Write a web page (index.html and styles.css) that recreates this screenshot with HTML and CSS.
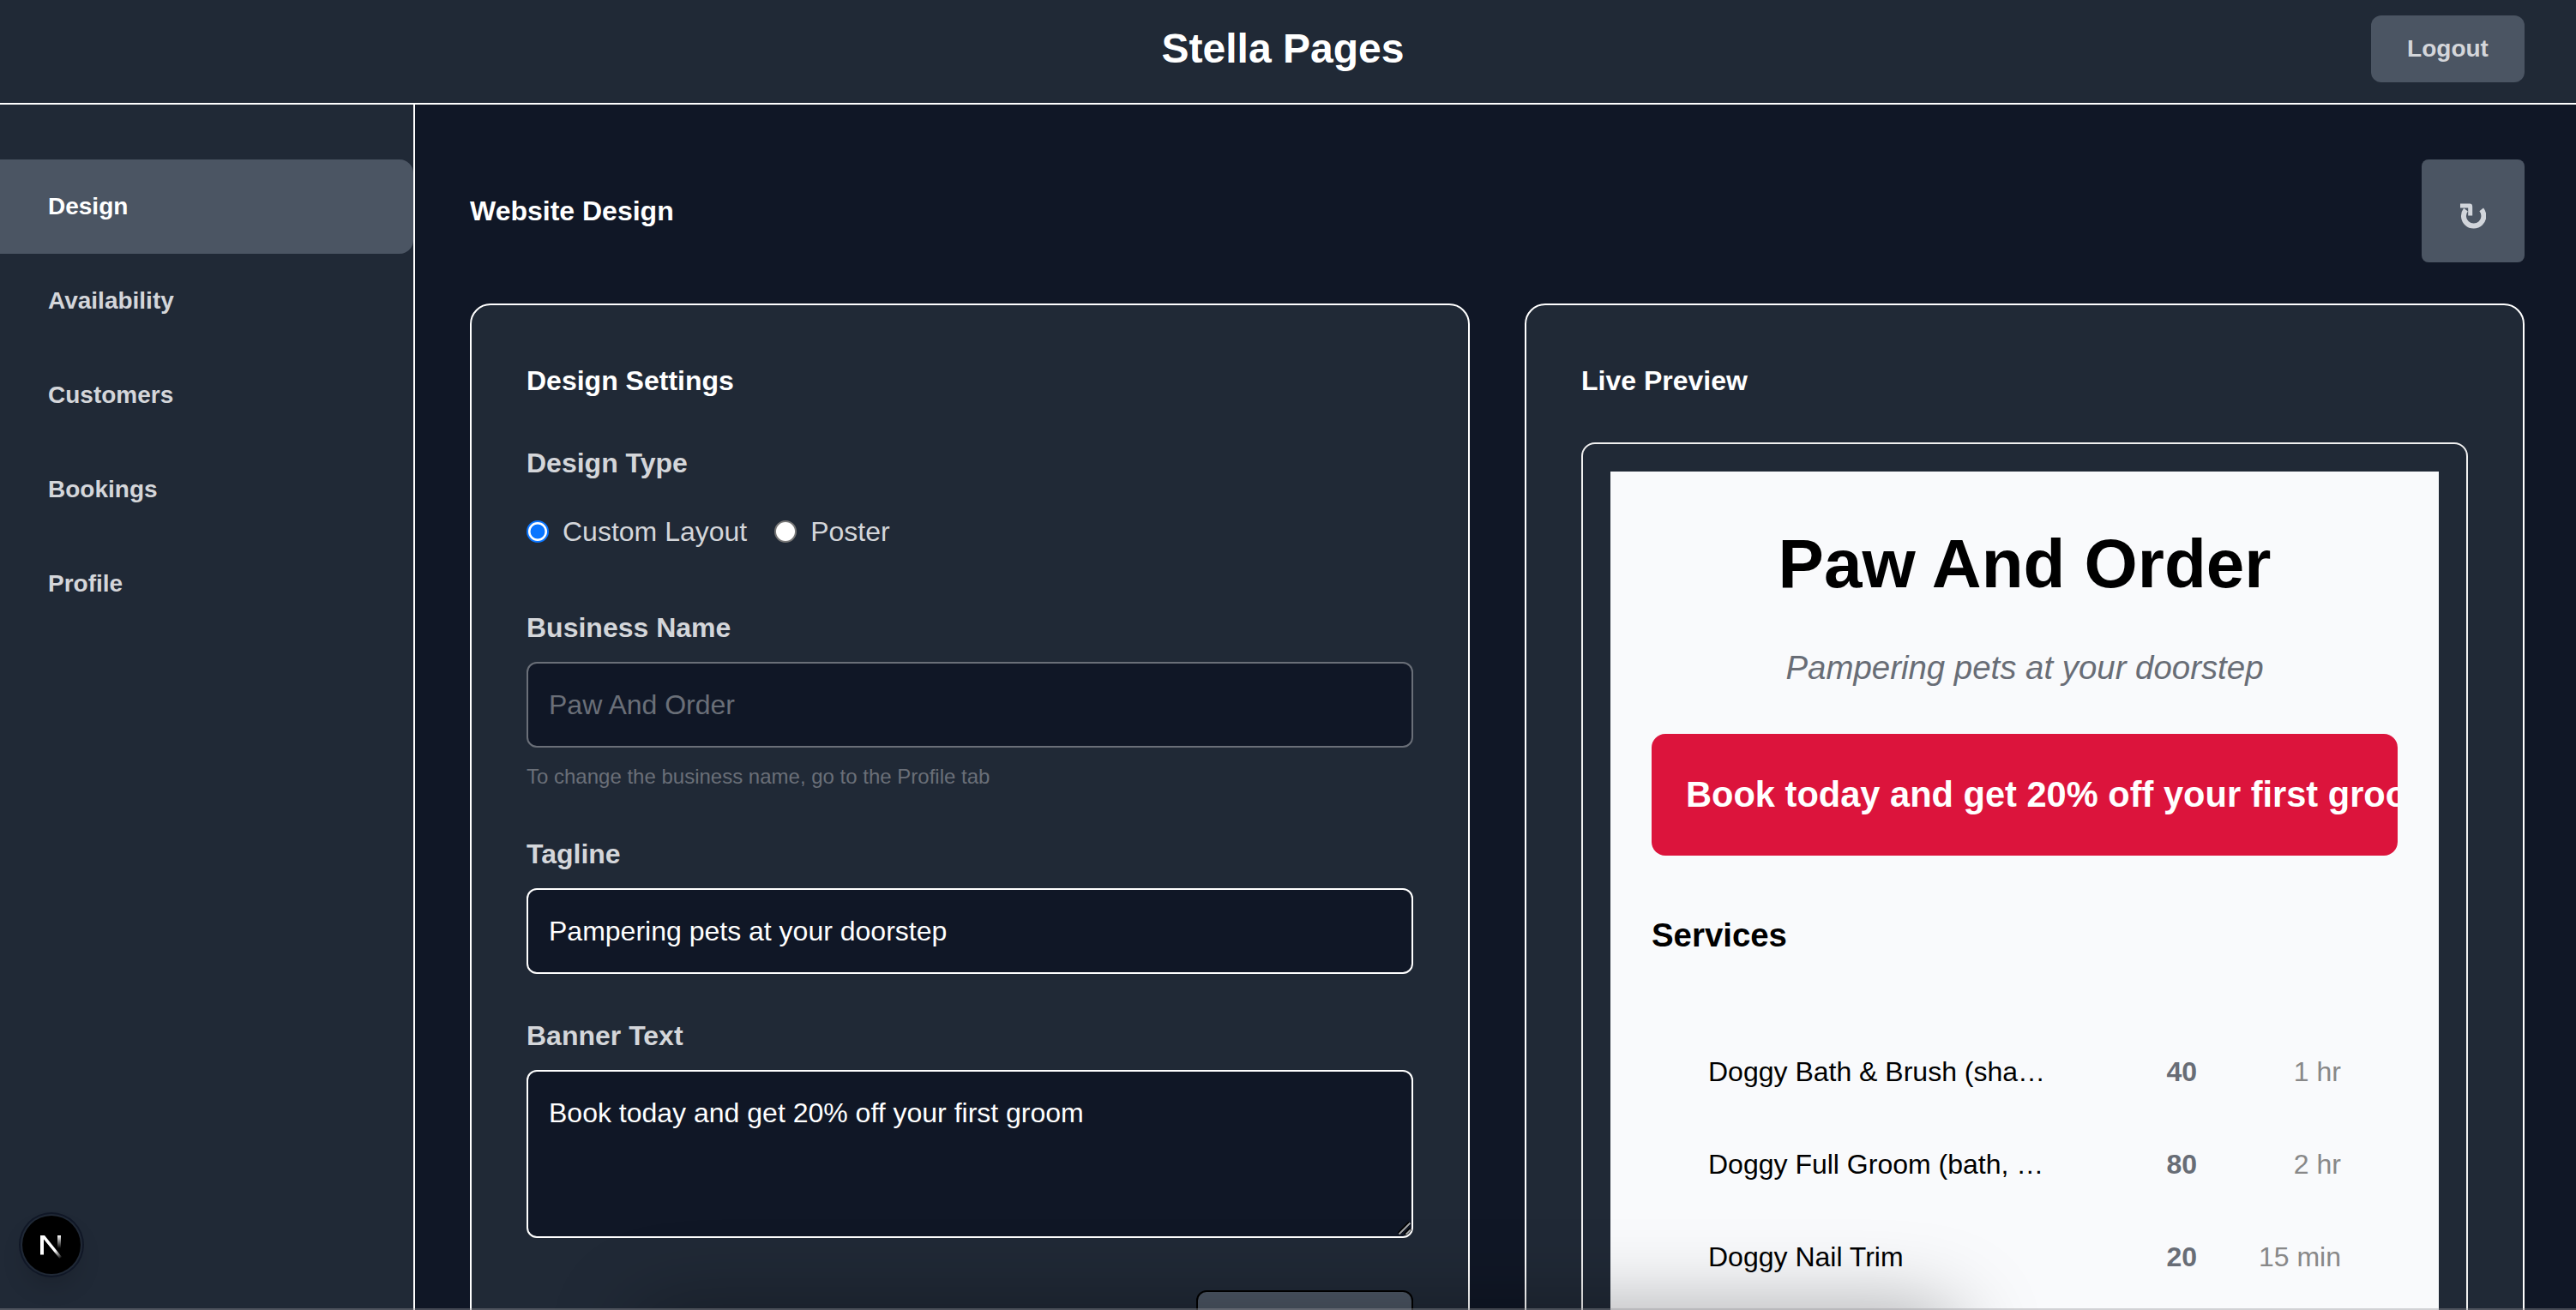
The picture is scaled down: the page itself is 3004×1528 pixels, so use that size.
FILE: index.html
```html
<!DOCTYPE html>
<html lang="en">

<head>
    <meta charset="UTF-8">
    <meta name="viewport" content="width=device-width, initial-scale=1.0">
    <title>Stella Pages</title>
    <link rel="stylesheet" href="styles.css">
</head>

<body>
    <header class="header">
        <h1>Stella Pages</h1>
        <button class="btn logout" type="button">Logout</button>
    </header>

    <div class="layout">
        <nav class="sidebar">
            <a class="nav-item active">Design</a>
            <a class="nav-item">Availability</a>
            <a class="nav-item">Customers</a>
            <a class="nav-item">Bookings</a>
            <a class="nav-item">Profile</a>
        </nav>

        <main class="main">
            <div class="page-head">
                <h2>Website Design</h2>
                <button class="btn refresh" type="button" aria-label="Refresh">
                    <svg width="30" height="30" viewBox="0 0 30 30">
                        <path d="M6.5 7.6A11.7 11.7 0 1 0 24.7 7.4" fill="none" stroke="#d1d5db" stroke-width="6" />
                        <path d="M0 0.6H11Q14.2 0.6 14.2 4V14.5H9.2V5.6H0Z" fill="#d1d5db" />
                    </svg>
                </button>
            </div>

            <div class="panels">
                <section class="card">
                    <h3>Design Settings</h3>

                    <div class="field field-type">
                        <div class="label">Design Type</div>
                        <div class="radio-group">
                            <label class="radio"><input type="radio" name="type" checked>Custom Layout</label>
                            <label class="radio"><input type="radio" name="type">Poster</label>
                        </div>
                    </div>

                    <div class="field">
                        <label class="label" for="name">Business Name</label>
                        <input class="input" id="name" type="text" value="Paw And Order" disabled>
                        <p class="hint">To change the business name, go to the Profile tab</p>
                    </div>

                    <div class="field">
                        <label class="label" for="tagline">Tagline</label>
                        <input class="input" id="tagline" type="text" value="Pampering pets at your doorstep">
                    </div>

                    <div class="field">
                        <label class="label" for="banner">Banner Text</label>
                        <div class="textarea-wrap">
                            <textarea class="input" id="banner">Book today and get 20% off your first groom</textarea>
                            <svg class="grip" width="16" height="16" viewBox="0 0 16 16">
                                <path d="M1 14L14 1M8.5 15L15 8.5" stroke="#000" stroke-width="4" />
                                <path d="M1.5 14.5L14.5 1.5M9.5 15L15 9.5" stroke="#a3a6a8" stroke-width="2" />
                            </svg>
                        </div>
                    </div>

                    <div class="actions">
                        <button class="btn save" type="button" aria-label="Save"></button>
                    </div>
                </section>

                <section class="card">
                    <h3>Live Preview</h3>

                    <div class="preview-frame">
                        <div class="preview">
                            <div class="preview-title">Paw And Order</div>
                            <p class="preview-tagline">Pampering pets at your doorstep</p>
                            <div class="preview-banner">Book today and get 20% off your first groom</div>

                            <h4>Services</h4>
                            <ul class="services">
                                <li>
                                    <span>Doggy Bath &amp; Brush (sha…</span>
                                    <span class="price">40</span>
                                    <span class="duration">1 hr</span>
                                </li>
                                <li>
                                    <span>Doggy Full Groom (bath, …</span>
                                    <span class="price">80</span>
                                    <span class="duration">2 hr</span>
                                </li>
                                <li>
                                    <span>Doggy Nail Trim</span>
                                    <span class="price">20</span>
                                    <span class="duration">15 min</span>
                                </li>
                            </ul>
                        </div>
                    </div>
                </section>
            </div>
        </main>
    </div>

    <div class="dev-badge">
        <svg width="68" height="68" viewBox="0 0 68 68">
            <defs>
                <linearGradient id="fadeDiag" gradientUnits="userSpaceOnUse" x1="38" y1="41" x2="45" y2="50">
                    <stop stop-color="#fff" />
                    <stop offset="1" stop-color="#fff" stop-opacity="0" />
                </linearGradient>
                <linearGradient id="fadeStem" gradientUnits="userSpaceOnUse" x1="43" y1="23" x2="43" y2="38">
                    <stop stop-color="#fff" />
                    <stop offset="1" stop-color="#fff" stop-opacity="0" />
                </linearGradient>
            </defs>
            <path d="M21 45.5V23H26L46 48L43.5 50L25 27.5V45.5Z" fill="url(#fadeDiag)" />
            <path d="M41 23H45V38H41Z" fill="url(#fadeStem)" />
        </svg>
    </div>

    <div class="dock-shadow"></div>
    <div class="bottom-edge"></div>
</body>

</html>
```
FILE: styles.css
```css
* {
    margin: 0;
    padding: 0;
    box-sizing: border-box;
}

body {
    font-family: "Liberation Sans", Arial, Helvetica, sans-serif;
    font-size: 32px;
    line-height: 1.5;
    background: #101726;
    color: #ffffff;
    height: 100vh;
    overflow: hidden;
    display: flex;
    flex-direction: column;
}

h1,
h2,
h3 {
    font-size: 32px;
    font-weight: 700;
}

.btn {
    background: #4b5563;
    color: #d4d6da;
    border: none;
    border-radius: 12px;
    font-family: inherit;
    font-size: 28px;
    font-weight: 700;
}

/* Header */
.header {
    flex: none;
    height: 122px;
    display: grid;
    grid-template-columns: 1fr auto 1fr;
    align-items: start;
    padding: 18px 60px 0 48px;
    background: #202936;
    border-bottom: 2px solid #ffffff;
}

.header h1 {
    grid-column: 2;
    font-size: 48px;
    line-height: 78px;
}

.logout {
    justify-self: end;
    width: 179px;
    height: 78px;
}

/* Sidebar */
.layout {
    flex: 1;
    min-height: 0;
    display: flex;
    overflow: hidden;
}

.sidebar {
    flex: none;
    width: 484px;
    padding-top: 64px;
    background: #202936;
    border-right: 2px solid #ffffff;
}

.nav-item {
    display: block;
    padding-left: 56px;
    font-size: 28px;
    font-weight: 700;
    line-height: 110px;
    color: #d4d6da;
    border-radius: 0 16px 16px 0;
}

.nav-item.active {
    background: #4b5563;
    color: #ffffff;
}

/* Main */
.main {
    flex: 1;
    min-width: 0;
    padding: 64px 60px 0 64px;
    overflow: hidden;
}

.page-head {
    display: flex;
    align-items: center;
    justify-content: space-between;
    margin-bottom: 48px;
}

.refresh {
    width: 120px;
    height: 120px;
    border-radius: 8px;
    display: flex;
    align-items: center;
    justify-content: center;
    padding-top: 11px;
}

.panels {
    display: grid;
    grid-template-columns: repeat(2, minmax(0, 1fr));
    gap: 64px;
}

.card {
    height: 1600px;
    padding: 64px;
    background: #202936;
    border: 2px solid #ffffff;
    border-radius: 24px;
}

.card h3 {
    margin-bottom: 48px;
}

/* Form */
.field {
    margin-bottom: 48px;
}

.field-type {
    margin-bottom: 64px;
}

.label {
    display: block;
    margin-bottom: 16px;
    font-weight: 700;
    color: #d4d6da;
}

.field-type .label {
    margin-bottom: 32px;
}

.radio-group {
    display: flex;
    gap: 32px;
}

.radio {
    display: flex;
    align-items: center;
    gap: 16px;
    color: #d4d6da;
}

.radio input {
    appearance: none;
    width: 26px;
    height: 26px;
    background: #ffffff;
    border: 2px solid #767676;
    border-radius: 50%;
}

.radio input:checked {
    background: radial-gradient(circle, #0a75ff 8px, #ffffff 8.8px);
    border: 2px solid #0a75ff;
}

.input {
    display: block;
    width: 100%;
    height: 100px;
    padding: 24px;
    background: #101726;
    color: #ffffff;
    border: 2px solid #ffffff;
    border-radius: 12px;
    font: inherit;
    outline: none;
}

.input:disabled {
    color: #6a6f78;
    border-color: #6a6f78;
}

.textarea-wrap {
    position: relative;
}

textarea.input {
    height: 196px;
    resize: none;
    overflow: hidden;
}

.grip {
    position: absolute;
    right: 2px;
    bottom: 3px;
}

.hint {
    margin-top: 16px;
    font-size: 24px;
    color: #6a6f78;
}

.actions {
    display: flex;
    justify-content: flex-end;
    margin-top: 61px;
}

.save {
    width: 253px;
    height: 88px;
    border: 2px solid #000000;
}

/* Preview */
.preview-frame {
    height: 1400px;
    padding: 32px;
    border: 2px solid #f0f0f0;
    border-radius: 16px;
}

.preview {
    height: 100%;
    padding: 48px;
    background: #f9fafc;
    color: #000000;
}

.preview-title {
    font-size: 80px;
    font-weight: 700;
    text-align: center;
    margin-bottom: 32px;
}

.preview-tagline {
    font-size: 38.4px;
    font-style: italic;
    text-align: center;
    color: #686d76;
    margin-bottom: 48px;
}

.preview-banner {
    padding: 40px;
    background: #dc143c;
    color: #ffffff;
    border-radius: 16px;
    font-size: 41.6px;
    font-weight: 700;
    white-space: nowrap;
    overflow: hidden;
    margin-bottom: 64px;
}

.preview h4 {
    font-size: 38.4px;
    margin-bottom: 10px;
}

.services {
    list-style: none;
    padding: 66px;
}

.services li {
    display: grid;
    grid-template-columns: 1fr auto 168px;
    line-height: 108px;
}

.price {
    font-weight: 700;
    color: #686d76;
}

.duration {
    text-align: right;
    color: #888888;
}

/* Overlays */
.dev-badge {
    position: fixed;
    left: 26px;
    bottom: 42px;
    width: 68px;
    height: 68px;
    border-radius: 50%;
    background: #000000;
    box-shadow: 0 0 0 2px #202936, 0 0 0 4px #101726, 0 16px 32px -8px rgba(0, 0, 0, 0.24);
}

.dev-badge svg {
    display: block;
}

.dock-shadow {
    position: fixed;
    left: 740px;
    right: 720px;
    bottom: -100px;
    height: 100px;
    border-radius: 40px;
    box-shadow: 0 0 96px rgba(0, 0, 0, 0.34);
}

.bottom-edge {
    position: fixed;
    left: 0;
    right: 0;
    bottom: 0;
    height: 2px;
    background: rgba(150, 150, 155, 0.4);
}
```
